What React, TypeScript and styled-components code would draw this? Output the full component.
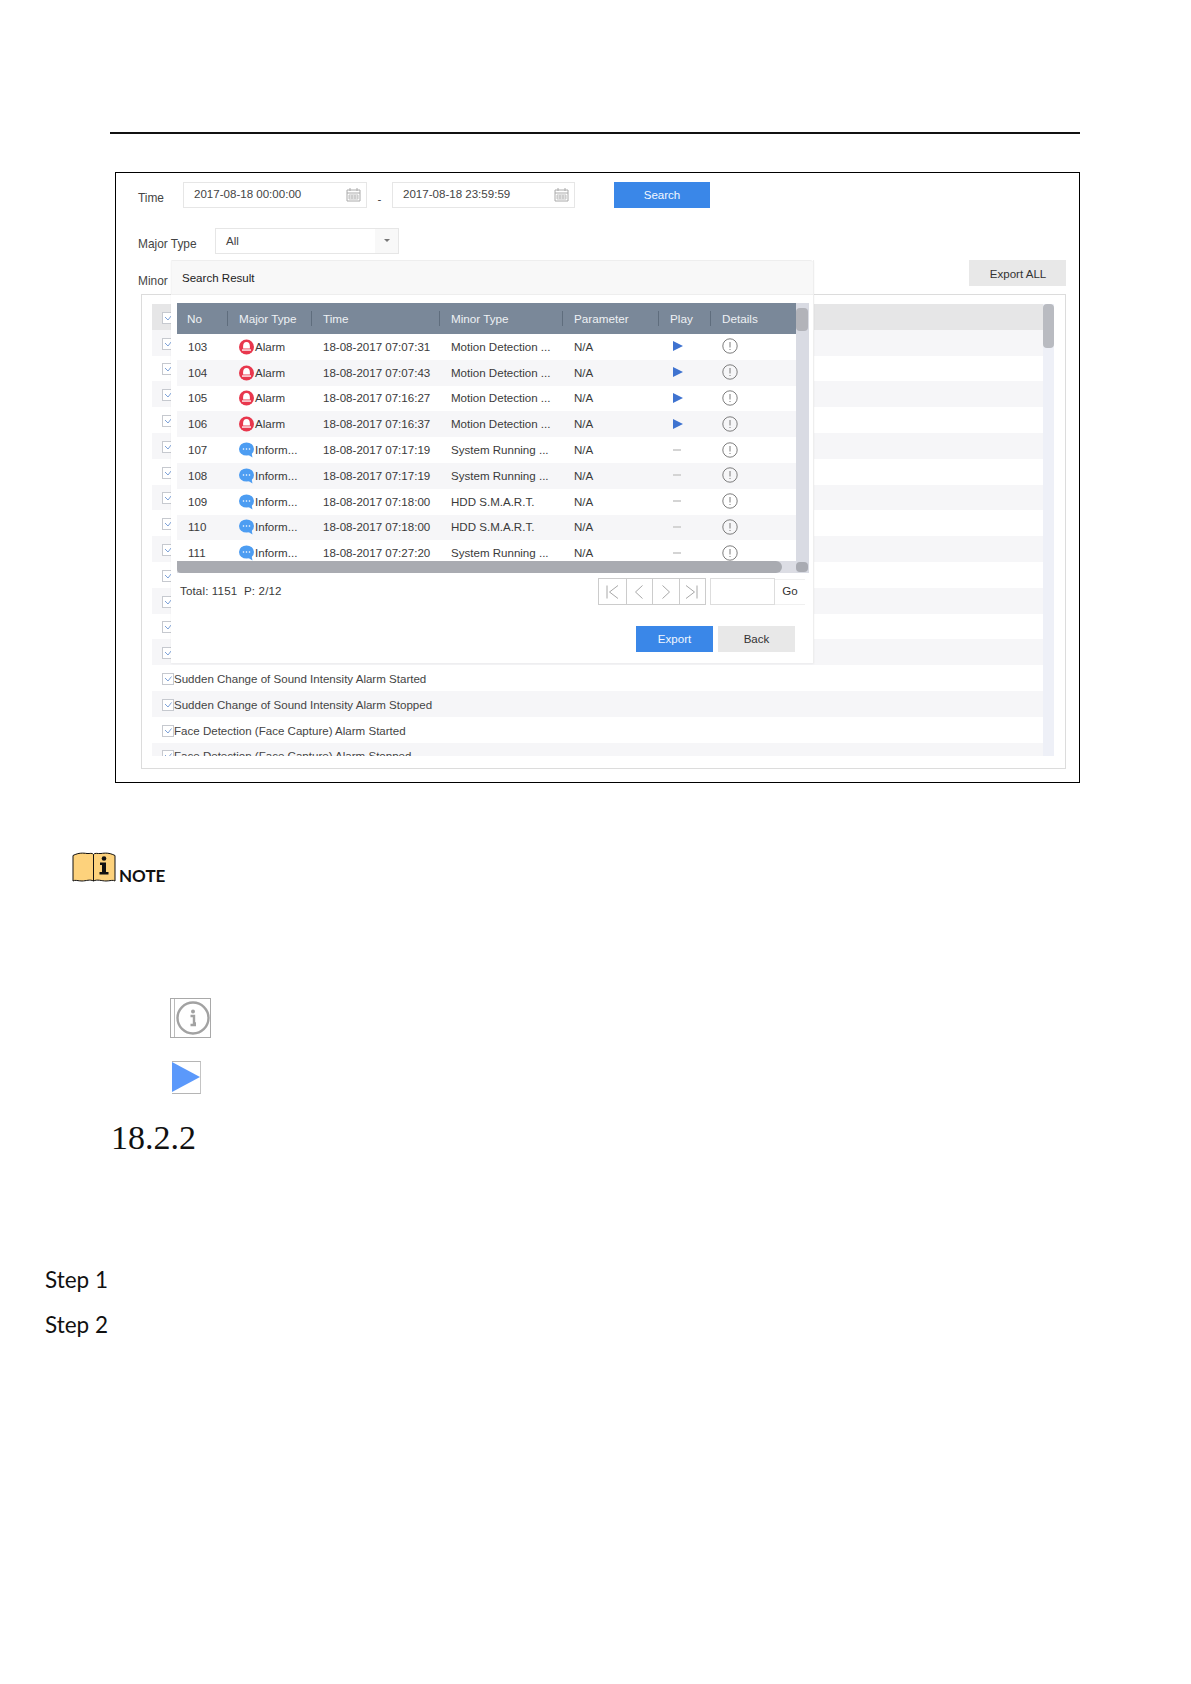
import * as React from "react";
import styled, { createGlobalStyle } from "styled-components";

const GlobalStyle = createGlobalStyle`
  html, body {
    margin: 0;
    background: #fff;
  }
  * {
    box-sizing: border-box;
  }
`;

const Page = styled.div`
  width: 1191px;
  height: 1684px;
  padding-top: 132px;
  font-family: "Liberation Sans", Arial, sans-serif;
  font-size: 11.55px;
  color: #3a3a3a;
  overflow: hidden;
`;

const Rule = styled.div`
  width: 970px;
  height: 2px;
  margin-left: 110px;
  background: #111;
`;

const Frame = styled.div`
  position: relative;
  width: 965px;
  height: 611px;
  margin: 38px 0 0 115px;
  padding: 9px 13px 0 22px;
  border: 1px solid #000;
`;

const TopRow = styled.div`
  display: flex;
  height: 26px;
`;

const SelectRow = styled(TopRow)`
  margin-top: 20px;
`;

const ExportRow = styled(TopRow)`
  margin-top: 6px;
  justify-content: space-between;
`;

const Label = styled.div<{ $width?: number }>`
  width: ${(p) => p.$width ?? 44}px;
  padding-top: 8px;
  font-size: 11.9px;
  line-height: 16px;
  white-space: nowrap;
  color: #444;
`;

const MinorLabel = styled(Label)`
  padding-top: 13px;
`;

const Field = styled.div<{ $width: number }>`
  display: flex;
  align-items: center;
  justify-content: space-between;
  width: ${(p) => p.$width}px;
  padding: 0 5px 2px 10px;
  border: 1px solid #e6e6e6;
  color: #444;
`;

const SelectField = styled(Field)`
  padding-right: 0;
  padding-bottom: 0;
`;

const SelectArrow = styled.div`
  display: flex;
  align-items: center;
  justify-content: center;
  align-self: stretch;
  width: 23px;
  padding-bottom: 2px;
  background: #f8f8f8;
  &::after {
    content: "";
    border: 3px solid transparent;
    border-top-color: #777;
    border-bottom: 0;
  }
`;

const Dash = styled.div`
  width: 25px;
  padding-top: 9px;
  line-height: 16px;
  text-align: center;
`;

const PrimaryButton = styled.div<{ $width: number }>`
  display: flex;
  align-items: center;
  justify-content: center;
  width: ${(p) => p.$width}px;
  height: 26px;
  background: #3a87e8;
  color: #f2f7ff;
`;

const SearchButton = styled(PrimaryButton)`
  margin-left: 39px;
`;

const GreyButton = styled(PrimaryButton)`
  background: #e8e8e8;
  color: #333;
`;

const ExportAllButton = styled(GreyButton)`
  padding: 1px 0 0 1px;
`;

const Panel = styled.div`
  display: grid;
  grid-template-columns: 891px 11px;
  width: 925px;
  height: 475px;
  margin: 8px 0 0 3px;
  padding: 9px 0 0 10px;
  border: 1px solid #dcdcdc;
`;

const List = styled.div`
  height: 452px;
  overflow: hidden;
`;

const ListRow = styled.div<{ $tone: "head" | "odd" | "even" }>`
  display: flex;
  align-items: center;
  height: 25.8px;
  padding: 2px 0 0 10px;
  white-space: nowrap;
  color: #444;
  background: ${(p) =>
    p.$tone === "head" ? "#e6e6e7" : p.$tone === "odd" ? "#f6f6f8" : "#fff"};
`;

const CheckBox = styled.div`
  display: flex;
  width: 12px;
  height: 12px;
  border: 1px solid #c6c9cf;
  background: #fff;
`;

const ListTrack = styled.div`
  height: 452px;
  background: #eef0f7;
`;

const ListThumb = styled.div`
  height: 44px;
  border-radius: 4px;
  background: #b9bbc1;
`;

const Dialog = styled.div`
  position: absolute;
  left: 55px;
  top: 87px;
  display: flex;
  flex-direction: column;
  width: 643px;
  height: 403px;
  background: #fff;
  border-right: 1px solid #eee;
  box-shadow: 0 1px 2px rgba(0, 0, 0, 0.05);
`;

const DialogTitle = styled.div`
  display: flex;
  align-items: center;
  flex: none;
  height: 35px;
  padding: 1px 0 0 10px;
  background: #f8f8f8;
  border: 1px solid #eee;
  border-left-color: #f4f4f4;
  border-right: 0;
  border-radius: 0 3px 0 0;
  color: #222;
`;

const ResultGrid = styled.div`
  display: grid;
  grid-template-columns: 619px 13px;
  grid-template-rows: 258px 12px;
  margin: 8px 0 0 6px;
`;

const TableClip = styled.div`
  overflow: hidden;
`;

const columns = "50px 84px 128px 123px 96px 52px 86px";

const HeadRow = styled.div`
  display: grid;
  grid-template-columns: ${columns};
  align-items: center;
  height: 31px;
  background: #7a8899;
  font-size: 11.7px;
  color: #eef1f4;
`;

const HeadCell = styled.div<{ $first?: boolean }>`
  height: 15px;
  padding-left: ${(p) => (p.$first ? 10 : 11)}px;
  line-height: 15px;
  border-left: ${(p) => (p.$first ? "0" : "1px solid #5f6d7d")};
`;

const TableRow = styled.div<{ $odd: boolean }>`
  display: grid;
  grid-template-columns: ${columns};
  align-items: center;
  height: 25.8px;
  background: ${(p) => (p.$odd ? "#f6f6f8" : "#fff")};
`;

const Cell = styled.div`
  padding-left: 12px;
  white-space: nowrap;
`;

const NoCell = styled(Cell)`
  padding-left: 11px;
`;

const TypeCell = styled(Cell)`
  display: flex;
  align-items: center;
  gap: 1px;
`;

const PlayCell = styled(Cell)`
  display: flex;
  padding-left: 15px;
  padding-bottom: 1px;
`;

const DetailCell = styled(Cell)`
  display: flex;
  padding-bottom: 1px;
`;

const PlayMark = styled.div`
  border-left: 10px solid #3f73d0;
  border-top: 5px solid transparent;
  border-bottom: 5px solid transparent;
`;

const NoPlayMark = styled.div`
  width: 8px;
  height: 2px;
  background: #d4d4d4;
`;

const VTrack = styled.div`
  grid-column: 2;
  grid-row: 1 / span 2;
  display: flex;
  flex-direction: column;
  justify-content: space-between;
  padding: 5px 1px 1px 0;
  background: #d9dbe3;
`;

const VThumb = styled.div`
  height: 23px;
  border-radius: 4px;
  background: #b2b3b9;
`;

const VThumbSmall = styled(VThumb)`
  height: 10px;
  background: #a9abb2;
`;

const HTrack = styled.div`
  grid-column: 1;
  grid-row: 2;
  background: #dcdde4;
`;

const HThumb = styled.div`
  width: 605px;
  height: 12px;
  border-radius: 0 6px 6px 4px;
  background: #a9abb1;
`;

const PagerRow = styled.div`
  display: flex;
  align-items: center;
  height: 27px;
  margin-top: 5px;
  padding: 0 8px 0 9px;
`;

const Total = styled.div`
  flex: 1;
  padding-bottom: 1px;
  white-space: pre;
  letter-spacing: 0.15px;
`;

const PagerButtons = styled.div`
  display: flex;
  border: 1px solid #ccc;
`;

const PagerButton = styled.div<{ $first?: boolean }>`
  display: flex;
  align-items: center;
  justify-content: center;
  width: 26.5px;
  height: 25px;
  border-left: ${(p) => (p.$first ? "0" : "1px solid #ccc")};
`;

const PageInput = styled.div`
  width: 65px;
  height: 27px;
  margin-left: 4px;
  border: 1px solid #ddd;
`;

const GoButton = styled.div`
  display: flex;
  align-items: center;
  justify-content: center;
  width: 30px;
  height: 26px;
  padding-bottom: 1px;
  border-top: 1px solid #f0f0f0;
  border-bottom: 1px solid #f0f0f0;
  color: #333;
`;

const DialogActions = styled.div`
  display: flex;
  justify-content: flex-end;
  gap: 5px;
  margin-top: 21px;
  padding-right: 18px;
`;

const NoteRow = styled.div`
  display: flex;
  align-items: flex-end;
  gap: 3px;
  margin: 68px 0 0 72px;
`;

const NoteText = styled.div`
  font-family: Lato, "Liberation Sans", sans-serif;
  font-size: 17px;
  font-weight: 700;
  line-height: 17px;
  color: #111;
`;

const InfoBox = styled.div`
  display: flex;
  align-items: center;
  justify-content: center;
  width: 41px;
  height: 40px;
  margin: 114px 0 0 170px;
  padding-left: 4px;
  border: 1px solid #a9a9a9;
  box-shadow: inset 3px 0 0 #fff, inset 4px 0 0 #bbb;
`;

const PlayBox = styled.div`
  width: 29px;
  height: 33px;
  margin: 23px 0 0 172px;
  border: 1px solid #b5b5b5;
  border-left: 0;
  border-right-color: #c4c4c4;
`;

const PlayShape = styled.div`
  border-left: 28px solid #5b99fb;
  border-top: 15.5px solid transparent;
  border-bottom: 15.5px solid transparent;
`;

const Heading = styled.h3`
  margin: 24px 0 0 111px;
  font-family: "Liberation Serif", "Times New Roman", serif;
  font-size: 34px;
  font-weight: 400;
  line-height: 40px;
  color: #111;
`;

const Step = styled.div<{ $gap: number }>`
  margin: ${(p) => p.$gap}px 0 0 45px;
  font-family: Lato, "Liberation Sans", sans-serif;
  font-size: 22.5px;
  line-height: 30px;
  color: #111;
`;

const CalendarIcon = () => (
  <svg width="15" height="15" viewBox="0 0 15 15" fill="none" stroke="#aaa" strokeWidth="1">
    <path d="M1 3h13v11H1zM1 6h13M4 1v3M11 1v3" />
    <path d="M3 8h9v4H3zM6 8v4M9 8v4M3 10h9" strokeWidth="0.7" />
  </svg>
);

const CheckMark = () => (
  <svg width="10" height="10" viewBox="0 0 10 10" fill="none" stroke="#7ea2d8" strokeWidth="1">
    <path d="M2 4l3 3 3.5-4.5" />
  </svg>
);

const AlarmIcon = () => (
  <svg width="15" height="16" viewBox="0 0 15 16">
    <circle cx="7.5" cy="8" r="7.5" fill="#e8374d" />
    <path d="M7.5 3C5 3 4.1 5 4.1 7.5V9.6H10.9V7.5C10.9 5 10 3 7.5 3Z" fill="#fff" />
    <path d="M3 10.4h9v1.3H3z" fill="#fff" />
  </svg>
);

const MessageIcon = () => (
  <svg width="15" height="16" viewBox="0 0 15 16">
    <ellipse cx="7.5" cy="7" rx="7.5" ry="6.6" fill="#4d9df2" />
    <path d="M8 12l5.5 3.5-1-5z" fill="#4d9df2" />
    <circle cx="4.5" cy="7" r="0.8" fill="#fff" />
    <circle cx="7.5" cy="7" r="0.8" fill="#fff" />
    <circle cx="10.5" cy="7" r="0.8" fill="#fff" />
  </svg>
);

const DetailIcon = () => (
  <svg width="16" height="16" viewBox="0 0 16 16" fill="none" stroke="#6e6e6e" strokeWidth="0.9">
    <circle cx="8" cy="8" r="7.2" />
    <path d="M8 4v5.5M8 11v1" />
  </svg>
);

const PagerIcon = ({ d }: { d: string }) => (
  <svg width="20" height="20" viewBox="0 0 20 20" fill="none" stroke="#a8a8a8" strokeWidth="1">
    <path d={d} />
  </svg>
);

const BookIcon = () => (
  <svg width="44" height="33" viewBox="0 0 44 33">
    <path
      d="M1 4.5C7 1.500 11 2 15 2.500C18 2.800 20 1.500 21.500 3.500V30C18 28 14 30 10 30C6 30 3 28.500 1 30Z"
      fill="#fdd27c"
      stroke="#111"
      strokeWidth="1"
    />
    <path
      d="M21.500 3.500C23 1.500 25 2.800 29 2.500C33 2 37 1.500 43 4.500V30C41 28.500 38 30 34 30C30 30 25 28 21.500 30Z"
      fill="#fdd27c"
      stroke="#111"
      strokeWidth="1"
    />
    <circle cx="32" cy="7.500" r="2.300" fill="#111" />
    <path d="M28 11.500h6V21h2.500v2.500H27.500V21H30v-7h-2z" fill="#111" />
  </svg>
);

const InfoIcon = () => (
  <svg width="34" height="34" viewBox="0 0 34 34" fill="none">
    <circle cx="17" cy="17" r="15.500" stroke="#a2a2a2" strokeWidth="2.400" />
    <circle cx="17" cy="10.500" r="2" fill="#a2a2a2" />
    <path d="M14.500 15H18V22.500H20M14.500 24H20" stroke="#a2a2a2" strokeWidth="2.400" />
  </svg>
);

const listLabels: Record<number, string> = {
  14: "Sudden Change of Sound Intensity Alarm Started",
  15: "Sudden Change of Sound Intensity Alarm Stopped",
  16: "Face Detection (Face Capture) Alarm Started",
  17: "Face Detection (Face Capture) Alarm Stopped",
};

const listRows = Array.from({ length: 18 }, (_, i) => i);

const events = [
  { no: 103, alarm: true, time: "18-08-2017 07:07:31", minor: "Motion Detection ..." },
  { no: 104, alarm: true, time: "18-08-2017 07:07:43", minor: "Motion Detection ..." },
  { no: 105, alarm: true, time: "18-08-2017 07:16:27", minor: "Motion Detection ..." },
  { no: 106, alarm: true, time: "18-08-2017 07:16:37", minor: "Motion Detection ..." },
  { no: 107, alarm: false, time: "18-08-2017 07:17:19", minor: "System Running ..." },
  { no: 108, alarm: false, time: "18-08-2017 07:17:19", minor: "System Running ..." },
  { no: 109, alarm: false, time: "18-08-2017 07:18:00", minor: "HDD S.M.A.R.T." },
  { no: 110, alarm: false, time: "18-08-2017 07:18:00", minor: "HDD S.M.A.R.T." },
  { no: 111, alarm: false, time: "18-08-2017 07:27:20", minor: "System Running ..." },
];

const headers = ["No", "Major Type", "Time", "Minor Type", "Parameter", "Play", "Details"];

const pagerPaths = [
  "M5 3.500v13M16 3.500L7.500 10 16 16.500",
  "M13.500 3.500L6.500 10l7 6.500",
  "M6.500 3.500l7 6.500-7 6.500",
  "M15 3.500v13M4 3.500L12.500 10 4 16.500",
];

export default function App() {
  return (
    <Page>
      <GlobalStyle />
      <Rule />
      <Frame>
        <TopRow>
          <Label $width={45}>Time</Label>
          <Field $width={184}>
            2017-08-18 00:00:00
            <CalendarIcon />
          </Field>
          <Dash>-</Dash>
          <Field $width={183}>
            2017-08-18 23:59:59
            <CalendarIcon />
          </Field>
          <SearchButton $width={96}>Search</SearchButton>
        </TopRow>
        <SelectRow>
          <Label $width={77}>Major Type</Label>
          <SelectField $width={184}>
            All
            <SelectArrow />
          </SelectField>
        </SelectRow>
        <ExportRow>
          <MinorLabel>Minor</MinorLabel>
          <ExportAllButton $width={97}>Export ALL</ExportAllButton>
        </ExportRow>
        <Panel>
          <List>
            {listRows.map((i) => (
              <ListRow key={i} $tone={i === 0 ? "head" : i % 2 ? "odd" : "even"}>
                <CheckBox>
                  <CheckMark />
                </CheckBox>
                {listLabels[i]}
              </ListRow>
            ))}
          </List>
          <ListTrack>
            <ListThumb />
          </ListTrack>
        </Panel>
        <Dialog>
          <DialogTitle>Search Result</DialogTitle>
          <ResultGrid>
            <TableClip>
              <HeadRow>
                {headers.map((h, i) => (
                  <HeadCell key={h} $first={i === 0}>
                    {h}
                  </HeadCell>
                ))}
              </HeadRow>
              {events.map((e, i) => (
                <TableRow key={e.no} $odd={i % 2 === 1}>
                  <NoCell>{e.no}</NoCell>
                  <TypeCell>
                    {e.alarm ? <AlarmIcon /> : <MessageIcon />}
                    {e.alarm ? "Alarm" : "Inform..."}
                  </TypeCell>
                  <Cell>{e.time}</Cell>
                  <Cell>{e.minor}</Cell>
                  <Cell>N/A</Cell>
                  <PlayCell>{e.alarm ? <PlayMark /> : <NoPlayMark />}</PlayCell>
                  <DetailCell>
                    <DetailIcon />
                  </DetailCell>
                </TableRow>
              ))}
            </TableClip>
            <VTrack>
              <VThumb />
              <VThumbSmall />
            </VTrack>
            <HTrack>
              <HThumb />
            </HTrack>
          </ResultGrid>
          <PagerRow>
            <Total>{"Total: 1151  P: 2/12"}</Total>
            <PagerButtons>
              {pagerPaths.map((d, i) => (
                <PagerButton key={d} $first={i === 0}>
                  <PagerIcon d={d} />
                </PagerButton>
              ))}
            </PagerButtons>
            <PageInput />
            <GoButton>Go</GoButton>
          </PagerRow>
          <DialogActions>
            <PrimaryButton $width={77}>Export</PrimaryButton>
            <GreyButton $width={77}>Back</GreyButton>
          </DialogActions>
        </Dialog>
      </Frame>
      <NoteRow>
        <BookIcon />
        <NoteText>NOTE</NoteText>
      </NoteRow>
      <InfoBox>
        <InfoIcon />
      </InfoBox>
      <PlayBox>
        <PlayShape />
      </PlayBox>
      <Heading>18.2.2</Heading>
      <Step $gap={107}>Step 1</Step>
      <Step $gap={15}>Step 2</Step>
    </Page>
  );
}
